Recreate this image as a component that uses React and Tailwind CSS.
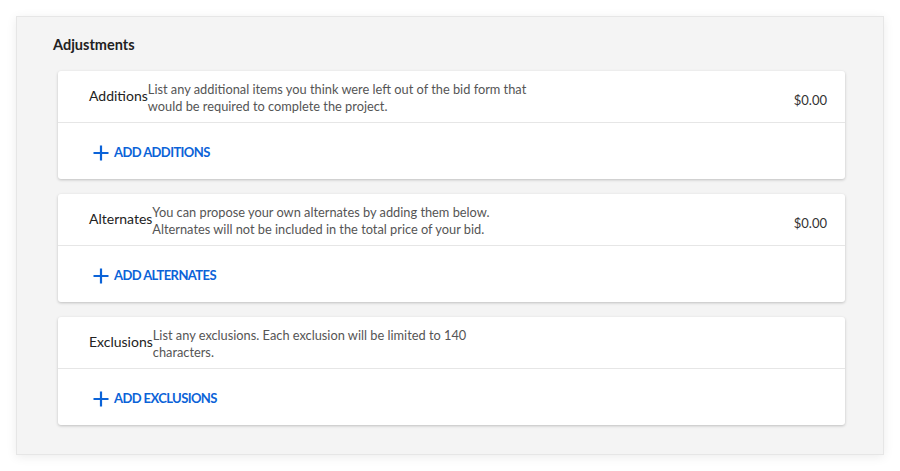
import React from "react";

const items = [
    {
        label: "Additions",
        desc: ["List any additional items you think were left out of the bid form that", "would be required to complete the project."],
        total: "$0.00",
        action: "ADD ADDITIONS",
    },
    {
        label: "Alternates",
        desc: ["You can propose your own alternates by adding them below.", "Alternates will not be included in the total price of your bid."],
        total: "$0.00",
        action: "ADD ALTERNATES",
    },
    {
        label: "Exclusions",
        desc: ["List any exclusions. Each exclusion will be limited to 140", "characters."],
        total: null,
        action: "ADD EXCLUSIONS",
    },
];

const PlusIcon = () => (
    <svg width="16" height="16" viewBox="0 0 16 16" className="shrink-0">
        <path d="M8 0.5v15M0.5 8h15" stroke="#0b63d8" strokeWidth="2.2" fill="none" />
    </svg>
);

const AdjustmentCard = ({ item }) => (
    <div className="bg-white rounded-[3px] shadow-[0_1px_3px_rgba(0,0,0,0.22)]">
        {/* Header */}
        <div className="flex items-center h-[52px] pl-[31px] pr-[18px] border-b border-[#e6e6e6]">
            <span className="text-[14px] text-[#222] leading-5 -mt-[2px]">{item.label}</span>
            <p className="text-[12.8px] leading-[17px] text-[#555] whitespace-nowrap mt-[2px]">
                {item.desc[0]}
                <br />
                {item.desc[1]}
            </p>
            <span className="ml-auto text-[13px] text-[#333] mt-[8px]">{item.total}</span>
        </div>
        {/* Footer */}
        <div className="flex items-center h-[56px] pl-[35px] pt-[3px]">
            <button className="flex items-center gap-[5px] text-[#0b63d8] font-bold text-[13px] tracking-[-0.6px]">
                <PlusIcon />
                {item.action}
            </button>
        </div>
    </div>
);

export default function App() {
    return (
        <div
            className="bg-white w-[900px] h-[471px] p-4"
            style={{ fontFamily: "Lato, 'Open Sans', sans-serif" }}
        >
            <div className="bg-[#f4f4f4] border border-[#e6e6e6] h-[439px] pt-[18px] pl-[36px] pr-[33px] shadow-[0_2px_10px_rgba(0,0,0,0.08)]">
                <h2 className="text-[14.5px] font-bold text-[#222] leading-5 mb-[16px]">Adjustments</h2>
                <div className="flex flex-col gap-[15px] mx-[5px]">
                    {items.map((item) => (
                        <AdjustmentCard key={item.label} item={item} />
                    ))}
                </div>
            </div>
        </div>
    );
}
